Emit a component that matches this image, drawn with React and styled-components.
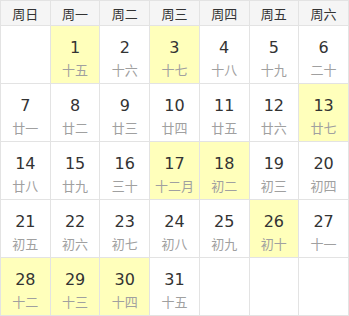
import React from 'react'
import styled, { createGlobalStyle } from 'styled-components'

const GlobalStyle = createGlobalStyle`
  html, body {
    margin: 0;
    padding: 0;
    background: #fff;
  }
`

const weekNames = ['周日', '周一', '周二', '周三', '周四', '周五', '周六']

const lunar = [
  '十五', '十六', '十七', '十八', '十九', '二十', '廿一', '廿二', '廿三', '廿四',
  '廿五', '廿六', '廿七', '廿八', '廿九', '三十', '十二月', '初二', '初三', '初四',
  '初五', '初六', '初七', '初八', '初九', '初十', '十一', '十二', '十三', '十四', '十五',
]

const marked = [1, 3, 13, 17, 18, 26, 28, 29, 30]

// month starts on monday, 31 days
const buildWeeks = () => {
  const cells = [null]
  for (let d = 1; d <= 31; d++) cells.push(d)
  while (cells.length % 7) cells.push(null)
  const weeks = []
  for (let i = 0; i < cells.length; i += 7) weeks.push(cells.slice(i, i + 7))
  return weeks
}

const Calendar = () => {
  const weeks = buildWeeks()
  return (
    <Table>
      <thead>
        <tr>
          {weekNames.map((w) => <HeadCell key={w}>{w}</HeadCell>)}
        </tr>
      </thead>
      <tbody>
        {weeks.map((week, i) => (
          <tr key={i}>
            {week.map((day, j) => (
              <DayCell key={j} $marked={day && marked.includes(day)}>
                {day && (
                  <>
                    <DayNum>{day}</DayNum>
                    <Lunar>{lunar[day - 1]}</Lunar>
                  </>
                )}
              </DayCell>
            ))}
          </tr>
        ))}
      </tbody>
    </Table>
  )
}

const Table = styled.table`
  width: 349px;
  table-layout: fixed;
  border-collapse: collapse;
  font-family: "DejaVu Sans", "Noto Sans CJK SC", sans-serif;
  td, th {
    border: 1px solid #e3e3e3;
    padding: 0;
    text-align: center;
  }
`

const HeadCell = styled.th`
  height: 24px;
  background: #f5f5f5;
  font-family: "Noto Sans CJK SC", sans-serif;
  font-weight: normal;
  font-size: 13px;
  color: #333;
`

const DayCell = styled.td`
  height: 45px;
  background: ${({ $marked }) => ($marked ? '#ffffbb' : '#fff')};
  vertical-align: top;
  && {
    padding-top: 12px;
  }
`

const DayNum = styled.div`
  font-size: 16px;
  line-height: 20px;
  color: #333;
`

const Lunar = styled.div`
  margin-top: 4px;
  font-family: "Noto Sans CJK SC", sans-serif;
  font-size: 13px;
  line-height: 16px;
  color: #a0a0a0;
`

const App = () => (
  <>
    <GlobalStyle />
    <Calendar />
  </>
)

export default App
